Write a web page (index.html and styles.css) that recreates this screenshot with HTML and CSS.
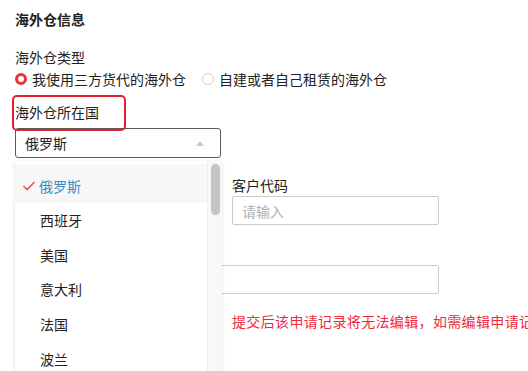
FILE: index.html
```html
<!DOCTYPE html>
<html lang="zh-CN">

<head>
  <meta charset="UTF-8">
  <meta name="viewport" content="width=device-width, initial-scale=1.0">
  <title>海外仓信息</title>
  <link rel="stylesheet" href="styles.css">
</head>

<body>
  <div class="page">
    <h3 class="title">海外仓信息</h3>

    <div class="field-label">海外仓类型</div>
    <div class="radio-group">
      <label class="radio checked"><span class="dot"></span>我使用三方货代的海外仓</label>
      <label class="radio"><span class="dot"></span>自建或者自己租赁的海外仓</label>
    </div>

    <div class="form-grid">
      <div class="field country">
        <div class="field-label"><span class="mark">海外仓所在国</span></div>
        <div class="select">
          <span class="select-value">俄罗斯</span>
          <span class="arrow"></span>
        </div>
        <div class="dropdown">
          <ul class="options">
            <li class="option selected">
              <svg class="check" width="14" height="12" viewBox="0 0 14 12">
                <polyline points="1.5,6 5,9.5 12.5,2" fill="none" stroke="#e8505b" stroke-width="1.6" />
              </svg>俄罗斯
            </li>
            <li class="option">西班牙</li>
            <li class="option">美国</li>
            <li class="option">意大利</li>
            <li class="option">法国</li>
            <li class="option">波兰</li>
          </ul>
          <div class="scrollbar"><span class="thumb"></span></div>
        </div>
      </div>
      <div></div>

      <div></div>
      <div class="field customer">
        <div class="field-label">客户代码</div>
        <input class="input" type="text" placeholder="请输入">
      </div>

      <div class="field wide">
        <input class="input" type="text">
      </div>

      <div></div>
      <div class="note">提交后该申请记录将无法编辑，如需编辑申请记</div>
    </div>
  </div>
</body>

</html>
```

FILE: styles.css
```css
* {
  box-sizing: border-box;
}

body {
  margin: 0;
  background: #fff;
  font-family: "Noto Sans CJK SC", "Liberation Sans", sans-serif;
  font-size: 14px;
  color: #222;
}

.page {
  height: 371px;
  padding: 9px 15px 0;
  overflow: hidden;
}

.title {
  margin: 0;
  font-size: 14px;
  line-height: 20px;
  font-weight: 700;
}

.field-label {
  line-height: 20px;
}

.title + .field-label {
  margin-top: 18px;
}

.radio-group {
  display: flex;
  margin-top: 2px;
  line-height: 20px;
}

.radio {
  display: flex;
  align-items: center;
  margin-right: 16px;
}

.radio .dot {
  width: 12px;
  height: 12px;
  margin-right: 5px;
  border-radius: 50%;
  border: 1px solid #cfcfcf;
  background: #fff;
}

.radio.checked .dot {
  border: 3.5px solid #e8323c;
}

.form-grid {
  display: grid;
  grid-template-columns: 206px 207px;
  column-gap: 11px;
  width: 424px;
  margin-top: 13px;
}

.field {
  position: relative;
}

.country .field-label {
  margin-bottom: 6px;
}

.mark {
  position: relative;
  display: inline-block;
}

.mark::after {
  content: "";
  position: absolute;
  left: -3px;
  top: -7px;
  width: 110px;
  height: 32px;
  border: 2px solid #e3202e;
  border-radius: 5px;
}

.select {
  display: flex;
  align-items: center;
  justify-content: space-between;
  height: 30px;
  padding: 0 16px 0 9px;
  border: 1px solid #5a5a5a;
  border-radius: 3px;
  background: #fff;
}

.arrow {
  width: 0;
  height: 0;
  border-left: 4.5px solid transparent;
  border-right: 4.5px solid transparent;
  border-bottom: 5px solid #cdcdcd;
}

.dropdown {
  position: absolute;
  top: calc(100% + 3px);
  left: 0;
  z-index: 2;
  display: flex;
  width: 207px;
  height: 240px;
  background: #fff;
  box-shadow: 0 1px 4px rgba(0, 0, 0, 0.12);
}

.options {
  flex: 1;
  margin: 0;
  padding: 0;
  list-style: none;
}

.option {
  display: flex;
  align-items: center;
  height: 34.6px;
  padding-left: 25px;
  color: #222;
}

.option.selected {
  height: 39px;
  padding: 4px 0 0 7px;
  margin-top: 3px;
  color: #3a8cc9;
  background: #f7f7f7;
}

.check {
  margin-right: 3px;
}

.scrollbar {
  width: 15px;
  padding: 3px 3px 0;
  background: #f8f8f8;
  border-left: 1px solid #efefef;
}

.thumb {
  display: block;
  width: 9px;
  height: 51px;
  border-radius: 5px;
  background: #c4c4c4;
}

.customer {
  margin-top: 17px;
}

.customer .field-label {
  margin-bottom: 1px;
}

.input {
  display: block;
  width: 100%;
  height: 29px;
  padding: 0 9px;
  border: 1px solid #cbcbcb;
  border-radius: 2px;
  font: inherit;
  color: #222;
  outline: none;
}

.input::placeholder {
  color: #b0b0b0;
}

.wide {
  grid-column: 1 / 3;
  margin-top: 40px;
}

.note {
  margin-top: 17px;
  line-height: 20px;
  color: #ee2a3c;
  white-space: nowrap;
  letter-spacing: 0.35px;
}
```
